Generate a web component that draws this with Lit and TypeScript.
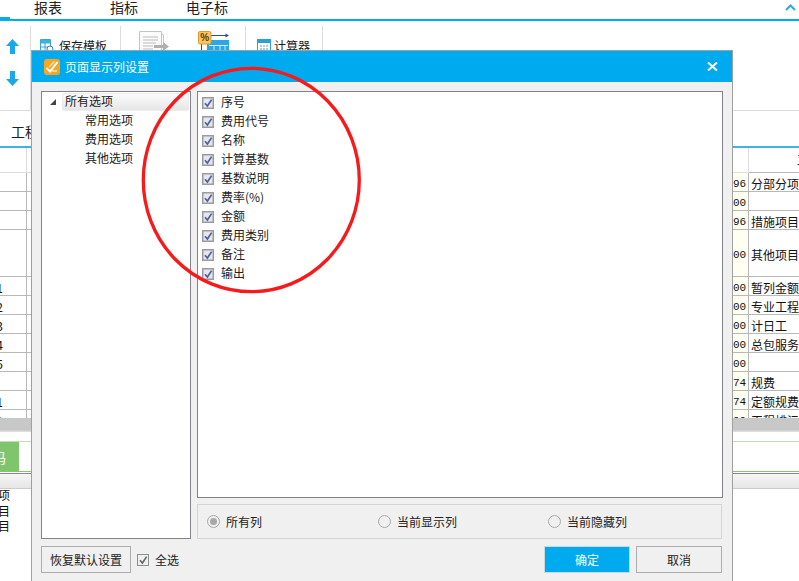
import { LitElement, html, css, svg } from "lit";
import { customElement } from "lit/decorators.js";

const F = css`"Noto Sans CJK SC", "Liberation Sans", sans-serif`;

const COLUMNS = ["序号", "费用代号", "名称", "计算基数", "基数说明", "费率(%)", "金额", "费用类别", "备注", "输出"];
const ROW_H = [25, 19, 19, 19, 47, 19, 19, 19, 19, 19, 19, 19, 19];
const LEFT = ["", "", "", "", "", "1", "2", "3", "4", "5", "", "1", "1"];
const NUM = ["", "96", "00", "96", "00", "00", "00", "00", "00", "00", "74", "74", "00"];
const NAME = ["", "分部分项", "", "措施项目", "其他项目", "暂列金额", "专业工程", "计日工", "总包服务", "", "规费", "定额规费", "工程排污"];

const checkMark = svg`<path d="M3 6.2 L5.4 9 L9.6 2.6" fill="none" stroke-width="1.7"/>`;

@customElement("app-root")
export class AppRoot extends LitElement {
  static styles = css`
    :host { display: block; width: 799px; height: 581px; position: relative; overflow: hidden; background: #fff; font: 12px/16px ${F}; color: #1a1a1a; }
    .tabs { display: flex; height: 19px; border-bottom: 2px solid #00aeef; font-size: 14px; line-height: 14px; color: #222; }
    .tab-mark { width: 10px; height: 2px; background: #00aeef; align-self: flex-end; margin-right: 24px; }
    .tab { margin-right: 48px; }
    .tab.last { margin-right: 0; }
    .chev { margin-left: auto; margin-right: 3px; margin-top: 4px; width: 11px; height: 7px; }
    .toolbar { display: flex; height: 89px; border-bottom: 1px solid #ddd; }
    .sec { margin-top: 5px; border-right: 1px solid #ddd; display: flex; }
    .s1 { flex-direction: column; padding-left: 6px; width: 24px; gap: 17px; padding-top: 13px; }
    .s2 { width: 80px; padding-left: 9px; padding-top: 13px; gap: 5px; }
    .s3 { width: 106px; padding-left: 18px; padding-top: 5px; gap: 29px; }
    .s4 { width: 65px; padding-left: 11px; padding-top: 13px; gap: 3px; }
    .toolbar span { line-height: 16px; white-space: nowrap; margin-top: -1px; }
    .pagetabs { height: 35px; border-bottom: 2px solid #40b4e0; font-size: 14px; line-height: 41px; padding-left: 11px; color: #222; overflow: hidden; }
    .grid { display: grid; grid-template-columns: 27px 706px 16px 50px; height: 270px; overflow: hidden; align-content: start; }
    .c { box-sizing: border-box; border-right: 1px solid #b8b8b8; border-bottom: 1px solid #b8b8b8; overflow: hidden; white-space: nowrap; display: flex; align-items: center; min-width: 0; color: #111; padding-top: 3px; }
    .c.head { border-color: #ddd; }
    .c.l { justify-content: flex-end; padding-right: 23px; }
    .c.n { background: #fffff2; font-family: "Liberation Mono", monospace; font-size: 11px; }
    .c.n.head { background: #fff; }
    .c.t { padding-left: 2px; border-right: none; }
    .c.h { padding-left: 48px; padding-top: 0; border-right: none; border-bottom-color: #b8b8b8; }
    .band { height: 14px; background: linear-gradient(#c8c8c8 85%, #e4e4e4); }
    .greenrow { margin-top: 9px; height: 29px; border-top: 1px solid #bfe0b0; border-bottom: 1px solid #86c46f; display: flex; }
    .code { width: 19px; background: #7fc56d; color: #fff; font-size: 14px; display: flex; align-items: center; justify-content: flex-end; padding-right: 13px; box-sizing: border-box; overflow: hidden; white-space: nowrap; }
    .darkline { height: 1px; background: #888; margin-top: 1px; }
    .subhead { height: 14px; background: linear-gradient(#f6f6f6, #e6e6e6); border-bottom: 1px solid #ccc; }
    .lower { margin-top: -2px; }
    .lower div { height: 15.5px; line-height: 15.5px; display: flex; justify-content: flex-end; width: 10px; white-space: nowrap; font-size: 12px; color: #111; }

    .dialog { position: absolute; left: 31px; top: 50px; width: 702px; height: 531px; box-sizing: border-box; border: 1px solid #a0a0a0; border-bottom: none; background: #f0f0f0; }
    .title { height: 31px; background: #00aaef; color: #fff; display: flex; align-items: center; padding-left: 12px; gap: 5px; font-size: 12px; }
    .close { margin-left: auto; margin-right: 14px; width: 11px; height: 9px; }
    .body { padding: 9px 9px 0; display: grid; grid-template-columns: 150px 526px; column-gap: 6px; grid-template-rows: 448px 27px; row-gap: 7px; }
    .tree { background: #fff; border: 1px solid #82838a; box-sizing: border-box; padding: 0 1px; }
    .node { display: flex; align-items: center; box-sizing: border-box; height: 19px; line-height: 17px; padding: 0 0 2px 42px; color: #222; }
    .node.top { padding: 0; }
    .tri { width: 19px; display: flex; justify-content: flex-start; padding-left: 7px; box-sizing: border-box; }
    .sel { width: 128px; height: 18px; box-sizing: border-box; padding-left: 2px; line-height: 13px; background: linear-gradient(#fbfbfb, #e6e6e6); border: 1px solid #ececec; border-radius: 2px; }
    .right { display: flex; flex-direction: column; gap: 6px; }
    .list { height: 407px; background: #fff; border: 1px solid #82838a; box-sizing: border-box; padding: 1px 0 0 4px; }
    .row { display: flex; align-items: center; height: 19px; gap: 7px; color: #222; }
    .row span { padding-bottom: 2px; }
    .cb { width: 12px; height: 12px; flex: none; stroke: #4d5f9f; }
    .radios { height: 35px; width: 525px; box-sizing: border-box; border: 1px solid #d5d5d5; display: grid; grid-template-columns: 171px 170px 1fr; align-items: center; padding-left: 9px; }
    .radio { display: flex; align-items: center; gap: 6px; color: #222; }
    .radio svg { width: 13px; height: 13px; flex: none; }
    .foot { grid-column: 1 / 3; display: flex; align-items: center; padding-right: 1px; }
    .btn { height: 27px; box-sizing: border-box; border: 1px solid #adadad; background: #f0f0f0; display: flex; align-items: center; justify-content: center; color: #222; }
    .restore { width: 90px; margin-right: 6px; }
    .all { display: flex; align-items: center; gap: 6px; color: #222; }
    .all .cb { stroke: #6a6a6a; }
    .ok { width: 86px; margin-left: auto; margin-right: 6px; background: #00aaef; color: #fff; border-color: #c8d8e0; }
    .cancel { width: 86px; }
    .ring { position: absolute; left: 0; top: 0; width: 799px; height: 581px; pointer-events: none; }
  `;

  private cb() {
    return html`<svg class="cb" viewBox="0 0 12 12"><rect x=".75" y=".75" width="10.5" height="10.5" fill="#e6e7ee" stroke="#9b9b9b" stroke-width="1.5"/>${checkMark}</svg>`;
  }

  private allCb() {
    return html`<svg class="cb" viewBox="0 0 12 12"><rect x=".5" y=".5" width="11" height="11" fill="#f0f0f0" stroke="#8f8f8f"/>${checkMark}</svg>`;
  }

  private radio(label: string, on = false) {
    return html`<div class="radio"><svg viewBox="0 0 13 13"><circle cx="6.5" cy="6.5" r="6" fill="#f0f0f0" stroke="#a8a8a8"/>${on ? svg`<circle cx="6.5" cy="6.5" r="3.5" fill="#a8a8a8"/>` : ""}</svg>${label}</div>`;
  }

  private table() {
    return ROW_H.map((h, i) => {
      const style = `height:${h}px`;
      const head = i === 0 ? "head" : "";
      return html`
        <div class="c l ${head}" style=${style}>${LEFT[i]}</div>
        <div class="c ${head}" style=${style}></div>
        <div class="c n ${head}" style=${style}>${NUM[i]}</div>
        ${i === 0
          ? html`<div class="c h" style=${style}>工程名称</div>`
          : html`<div class="c t" style=${style}>${NAME[i]}</div>`}
      `;
    });
  }

  render() {
    return html`
      <div class="tabs">
        <i class="tab-mark"></i>
        <span class="tab">报表</span><span class="tab">指标</span><span class="tab last">电子标</span>
        <svg class="chev" viewBox="0 0 11 7"><path d="M1 6 L5.5 1.5 L10 6" fill="none" stroke="#2aa8ee" stroke-width="2"/></svg>
      </div>
      <div class="toolbar">
        <div class="sec s1">
          <svg width="13" height="15" viewBox="0 0 13 15"><path d="M6.5 0 L13 7 H9 V15 H4 V7 H0 Z" fill="#1aa8e8"/></svg>
          <svg width="13" height="15" viewBox="0 0 13 15"><path d="M6.5 15 L13 8 H9 V0 H4 V8 H0 Z" fill="#1aa8e8"/></svg>
        </div>
        <div class="sec s2">
          <svg width="14" height="14" viewBox="0 0 14 14"><path d="M.5 .5 H10.5 V13.5 H.5 Z M.5 4 H10.5 M.5 8 H10.5 M5 .5 V13.5" fill="#fff" stroke="#3aa6cc"/><rect x="1" y="1" width="9" height="3" fill="#3ab4dc"/><circle cx="10" cy="10" r="3" fill="#fff" stroke="#3a7ea8"/></svg>
          <span>保存模板</span>
        </div>
        <div class="sec s3">
          <svg width="30" height="26" viewBox="0 0 30 26"><path d="M3.5 3.5 H24.5 V25 H3.5 Z" fill="#fff" stroke="#c8c8c8"/><path d="M.5 .5 H22.5 V24 H.5 Z" fill="#fbfbfb" stroke="#c4c4c4"/><path d="M4 6 H19 M4 9 H19 M4 12 H17 M4 15 H14 M4 18 H14" stroke="#bbb"/><path d="M15 14 H24 V11 L30 15.5 L24 20 V17 H15 Z" fill="#b0b0b0"/></svg>
          <svg width="31" height="26" viewBox="0 0 31 26"><path d="M13 4.5 H29" stroke="#2a4c9c"/><path d="M31 4.5 L27.5 2.5 V6.5 Z" fill="#2a4c9c"/><path d="M3.5 13 V26" stroke="#2a4c9c"/><rect x="9" y="9" width="22" height="10" fill="#2aa8e4"/><path d="M11 14.5 H30 M16 14 V19 M22 14 V19 M27 14 V19" stroke="#cdeefa"/><rect x=".5" y=".5" width="12.5" height="12.5" rx="1.5" fill="#fbc65a" stroke="#d99a2a"/><text x="6.7" y="10" font-size="10" font-family="Liberation Sans" font-weight="700" text-anchor="middle" fill="#5a3a10">%</text></svg>
        </div>
        <div class="sec s4">
          <svg width="14" height="14" viewBox="0 0 14 14"><rect x=".5" y=".5" width="13" height="13" fill="#fff" stroke="#2aa0d8"/><rect x="1" y="1" width="12" height="3" fill="#2aa0d8"/><path d="M3 7 H5 M6 7 H8 M9 7 H11 M3 10 H5 M6 10 H8 M9 10 H11" stroke="#6a8fc0"/></svg>
          <span>计算器</span>
        </div>
      </div>
      <div class="pagetabs">工程</div>
      <div class="grid">${this.table()}</div>
      <div class="band"></div>
      <div class="greenrow"><div class="code">编码</div></div>
      <div class="darkline"></div>
      <div class="subhead"></div>
      <div class="lower"><div>选项</div><div>项目</div><div>项目</div></div>

      <div class="dialog">
        <div class="title">
          <svg width="16" height="16" viewBox="0 0 16 16"><rect width="16" height="16" rx="3" fill="#f5a623"/><path d="M2.5 9 L6 12.5 L13.5 3" fill="none" stroke="#fff" stroke-width="2"/><path d="M10.5 2.5 L5 8 M8 12 H13" stroke="#fde2ae" stroke-width="1.4"/></svg>
          <span>页面显示列设置</span>
          <svg class="close" viewBox="0 0 11 9"><path d="M1 .5 L10 8.5 M10 .5 L1 8.5" stroke="#fff" stroke-width="2"/></svg>
        </div>
        <div class="body">
          <div class="tree">
            <div class="node top">
              <span class="tri"><svg width="6" height="6" viewBox="0 0 6 6"><path d="M6 0 V6 H0 Z" fill="#444"/></svg></span>
              <span class="sel">所有选项</span>
            </div>
            <div class="node">常用选项</div>
            <div class="node">费用选项</div>
            <div class="node">其他选项</div>
          </div>
          <div class="right">
            <div class="list">
              ${COLUMNS.map((c) => html`<div class="row">${this.cb()}<span>${c}</span></div>`)}
            </div>
            <div class="radios">
              ${this.radio("所有列", true)}${this.radio("当前显示列")}${this.radio("当前隐藏列")}
            </div>
          </div>
          <div class="foot">
            <div class="btn restore">恢复默认设置</div>
            <div class="all">${this.allCb()}<span>全选</span></div>
            <div class="btn ok">确定</div>
            <div class="btn cancel">取消</div>
          </div>
        </div>
      </div>
      <svg class="ring" viewBox="0 0 799 581"><ellipse cx="251.3" cy="180" rx="108" ry="111.7" fill="none" stroke="#f8191a" stroke-width="3.3"/></svg>
    `;
  }
}
